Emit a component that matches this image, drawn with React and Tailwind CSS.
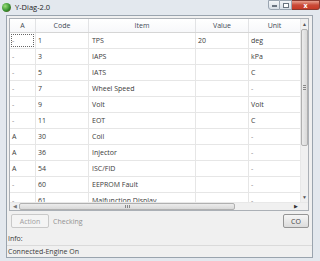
import React from "react";

const rows = [
  { a: "-", code: "1", item: "TPS", value: "20", unit: "deg" },
  { a: "-", code: "3", item: "IAPS", value: "", unit: "kPa" },
  { a: "-", code: "5", item: "IATS", value: "", unit: "C" },
  { a: "-", code: "7", item: "Wheel Speed", value: "", unit: "-" },
  { a: "-", code: "9", item: "Volt", value: "", unit: "Volt" },
  { a: "-", code: "11", item: "EOT", value: "", unit: "C" },
  { a: "A", code: "30", item: "Coil", value: "", unit: "-" },
  { a: "A", code: "36", item: "Injector", value: "", unit: "-" },
  { a: "A", code: "54", item: "ISC/FID", value: "", unit: "-" },
  { a: "-", code: "60", item: "EEPROM Fault", value: "", unit: "-" },
  { a: "-", code: "61", item: "Malfunction Display", value: "", unit: "-" },
];

const cols = "grid grid-cols-[26px_53px_107px_53px_52px]";

const App = () => {
  return (
    <div
      className="w-[320px] h-[261px] flex flex-col bg-[#e3e8ee] text-[7px] leading-none text-[#3a3a3a] overflow-hidden"
      style={{ fontFamily: '"Open Sans", "Noto Sans", sans-serif' }}
    >
      {/* title bar */}
      <div className="h-[15px] flex items-start shrink-0">
        <div className="flex items-center gap-[4px] pl-[2px] pt-[3px]">
          <div className="w-[9px] h-[9px] rounded-full bg-[radial-gradient(circle_at_35%_35%,#9be07a,#2f8a2a_60%,#8b2a1e)]" />
          <span className="text-[7.5px] text-[#222]">Y-Diag-2.0</span>
        </div>
        <div className="ml-auto flex items-start">
          <div className="w-[12px] h-[10px] border border-[#9aa5b1] rounded-bl-[3px] bg-gradient-to-b from-[#f3f5f8] to-[#d7dee6] flex items-end justify-center pb-[2px]">
            <div className="w-[5px] h-[2px] bg-white border border-[#6a7480]" />
          </div>
          <div className="w-[12px] h-[10px] border border-l-0 border-[#9aa5b1] bg-gradient-to-b from-[#f3f5f8] to-[#d7dee6] flex items-center justify-center">
            <div className="w-[6px] h-[5px] border border-[#6a7480] bg-white" />
          </div>
          <div className="w-[28px] h-[10px] border border-l-0 border-[#8a3a30] rounded-br-[3px] bg-gradient-to-b from-[#e8a090] via-[#c94a38] to-[#c83a26] flex items-center justify-center text-white text-[7px] font-bold">
            x
          </div>
        </div>
      </div>

      {/* client area */}
      <div className="flex-1 ml-[6px] mr-[7px] mb-[3px] border border-[#9aa4ae] bg-[#f0f0f0] flex flex-col">
        {/* table */}
        <div className="mt-[2px] ml-[2px] mr-[3px] h-[193px] border border-[#abb0b6] bg-white flex flex-col">
          <div className="flex flex-1 min-h-0">
            <div className="flex-1 min-w-0 overflow-hidden flex flex-col">
              <div className={`${cols} h-[14px] shrink-0 border-b border-[#d5d5d5] bg-gradient-to-b from-white to-[#f7f8fa] text-[#3f4a55]`}>
                {["A", "Code", "Item", "Value", "Unit"].map((h) => (
                  <div key={h} className="flex items-center justify-center border-r border-[#e2e3e5]">
                    {h}
                  </div>
                ))}
              </div>
              <div className="flex-1 overflow-hidden">
                {rows.map((r, i) => (
                  <div key={i} className={`${cols} h-[16px] border-b border-[#e6e6e6]`}>
                    <div className="border-r border-[#e6e6e6] flex items-center pl-[2px] relative">
                      <span className={r.a === "-" ? "text-[#888]" : ""}>{r.a}</span>
                      {i === 0 && (
                        <div className="absolute inset-[1px] border border-dotted border-[#666]" />
                      )}
                    </div>
                    <div className="border-r border-[#e6e6e6] flex items-center pl-[2px]">{r.code}</div>
                    <div className="border-r border-[#e6e6e6] flex items-center pl-[3px]">{r.item}</div>
                    <div className="border-r border-[#e6e6e6] flex items-center pl-[2px]">{r.value}</div>
                    <div className="flex items-center pl-[2px]">
                      <span className={r.unit === "-" ? "text-[#888]" : ""}>{r.unit}</span>
                    </div>
                  </div>
                ))}
              </div>
            </div>
            {/* vertical scrollbar */}
            <div className="w-[8px] shrink-0 bg-[#f0f0f0] flex flex-col items-center border-l border-[#e8e8e8]">
              <div className="h-[10px] flex items-center justify-center text-[5px] text-[#555]">▲</div>
              <div className="w-[7px] h-[117px] rounded-[2px] border border-[#b0b0b0] bg-gradient-to-r from-[#ececec] to-[#d9d9d9] flex items-center justify-center">
                <div className="flex flex-col gap-[1px]">
                  <div className="w-[3px] h-px bg-[#888]" />
                  <div className="w-[3px] h-px bg-[#888]" />
                  <div className="w-[3px] h-px bg-[#888]" />
                </div>
              </div>
              <div className="mt-auto h-[10px] flex items-center justify-center text-[5px] text-[#555]">▼</div>
            </div>
          </div>
          {/* horizontal scrollbar */}
          <div className="h-[8px] shrink-0 flex bg-[#f0f0f0] border-t border-[#e8e8e8]">
            <div className="w-[9px] flex items-center justify-center text-[5px] text-[#777]">◀</div>
            <div className="w-[216px] h-[7px] rounded-[2px] border border-[#b0b0b0] bg-gradient-to-b from-[#ececec] to-[#d9d9d9] flex items-center justify-center">
              <div className="flex gap-[1px]">
                <div className="w-px h-[3px] bg-[#888]" />
                <div className="w-px h-[3px] bg-[#888]" />
                <div className="w-px h-[3px] bg-[#888]" />
              </div>
            </div>
            <div className="ml-auto w-[9px] flex items-center justify-center text-[5px] text-[#333]">▶</div>
            <div className="w-[8px] bg-[#f0f0f0]" />
          </div>
        </div>

        {/* buttons */}
        <div className="flex items-center mt-[3px] ml-[4px] mr-[3px] h-[14px]">
          <div className="w-[38px] h-[14px] border border-[#c9c9c9] rounded-[2px] bg-[#f4f4f4] flex items-center justify-center text-[#a0a0a0]">
            Action
          </div>
          <span className="ml-[4px] text-[#909090]">Checking</span>
          <div className="ml-auto w-[26px] h-[14px] border border-[#959595] rounded-[2px] bg-gradient-to-b from-[#f6f6f6] to-[#dcdcdc] flex items-center justify-center text-[#444]">
            CO
          </div>
        </div>

        <div className="mt-[5px] ml-[1px] h-[10px] flex items-center">Info:</div>

        {/* status bar */}
        <div className="mt-auto h-[12px] border-t border-[#dadada] flex items-center pl-[1px]">
          Connected-Engine On
        </div>
      </div>
    </div>
  );
};

export default App;
